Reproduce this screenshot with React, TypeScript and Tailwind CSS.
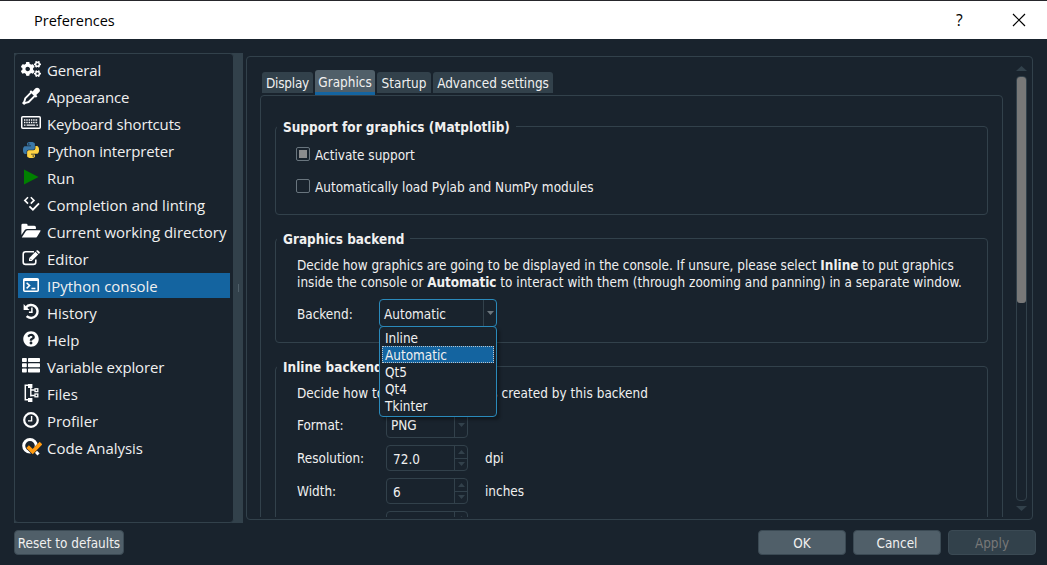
import type { ReactNode } from "react";
import { FaCogs, FaQuestionCircle } from "react-icons/fa";

const PYTHON_HALF =
  "M14.25.18l.9.2.73.26.59.3.45.32.34.34.25.34.16.33.1.3.04.26.02.2-.01.13V8.5l-.05.63-.13.55-.21.46-.26.38-.3.31-.33.25-.35.19-.35.14-.33.1-.3.07-.26.04-.21.02H8.77l-.69.05-.59.14-.5.22-.41.27-.33.32-.27.35-.2.36-.15.37-.1.35-.07.32-.04.27-.02.21v3.06H3.17l-.21-.03-.28-.07-.32-.12-.35-.18-.36-.26-.36-.36-.35-.46-.32-.59-.28-.73-.21-.88-.14-1.05-.05-1.23.06-1.22.16-1.04.24-.87.32-.71.36-.57.4-.44.42-.33.42-.24.4-.16.36-.1.32-.05.24-.01h.16l.06.01h8.16v-.83H6.18l-.01-2.75-.02-.37.05-.34.11-.31.17-.28.25-.26.31-.23.38-.2.44-.18.51-.15.58-.12.64-.1.71-.06.77-.04.84-.02 1.27.05zm-6.3 1.98l-.23.33-.08.41.08.41.23.34.33.22.41.09.41-.09.33-.22.23-.34.08-.41-.08-.41-.23-.33-.33-.22-.41-.09-.41.09z";

const DropperIcon = () => (
  <svg width="19" height="18" viewBox="0 0 19 18" fill="none">
    <path
      d="M9.4 5.2L3.2 11.4L2.4 14.6L1.2 16L2.2 16.8L3.6 15.8L6.6 15L12.8 8.8"
      stroke="currentColor"
      strokeWidth="1.9"
      strokeLinejoin="round"
    />
    <path
      d="M7.6 4.6L9 3.2L10.6 4.4L13.2 1.4C15.6-.9 19.6 2.600 17.300 5L14.200 7.900L15.400 9.300L13.900 10.800z"
      fill="currentColor"
    />
  </svg>
);

const KeyboardIcon = () => (
  <svg width="20" height="13" viewBox="0 0 20 13" fill="none" stroke="currentColor">
    <rect x="0.75" y="0.75" width="18.5" height="11.5" rx="1" strokeWidth="1.5" />
    <path d="M3 4h14M3 6.5h14" strokeWidth="1.3" strokeDasharray="1.4 0.9" />
    <path d="M3 9.2h1.5M5.6 9.2h8.600M15.400 9.200h1.600" strokeWidth="1.3" />
  </svg>
);

const PythonIcon = () => (
  <svg width="16" height="16" viewBox="0 0 24 24">
    <path d={PYTHON_HALF} fill="#3b78a8" />
    <path d={PYTHON_HALF} fill="#ffd343" transform="rotate(180 12 12)" />
  </svg>
);

const RunIcon = () => (
  <svg width="16" height="16" viewBox="0 0 16 16">
    <path d="M1 0.5L15.5 8L1 15.5z" fill="#008000" />
  </svg>
);

const LintIcon = () => (
  <svg width="17" height="16" viewBox="0 0 17 16" fill="none" stroke="currentColor" strokeWidth="1.6">
    <path d="M5 1.2L1.8 4.4L5 7.6M7.8 1.2L11 4.4L7.8 7.6" />
    <path d="M6.4 10.4L9.9 13.7L16 7.4" strokeWidth="1.8" />
  </svg>
);

const FolderIcon = () => (
  <svg width="20" height="16" viewBox="0 0 20 16" fill="currentColor">
    <path d="M0.400 13.200V2.200Q0.400 0.800 1.800 0.800H5.200Q6.600 0.800 6.600 2.200V2.700H13.400Q14.900 2.700 14.900 4.200V6H6.200Q4.600 6 3.600 7.200L0.400 12z" />
    <path d="M0.900 14.200L4.800 8.200Q5.500 7.200 6.700 7.200H19Q20 7.200 19.400 8.200L16.200 13.400Q15.500 14.600 14.200 14.600H1.200Q0.700 14.600 0.900 14.200z" />
  </svg>
);

const EditIcon = () => (
  <svg width="19" height="16" viewBox="0 0 19 16" fill="none" stroke="currentColor">
    <path d="M12 1.800H3.600Q1.200 1.800 1.200 4.200V12Q1.200 14.400 3.600 14.400H11.400Q13.800 14.400 13.800 12V9.600" strokeWidth="1.6" />
    <path d="M7 8.200L13.400 1.800L16.200 4.600L9.800 11H7z" fill="currentColor" stroke="none" />
    <path d="M14.100 1.100L15 0.300Q15.500 0 16 0.400L17.700 2.100Q18.100 2.600 17.700 3.100L16.900 3.900z" fill="currentColor" stroke="none" />
    <path d="M8.200 8.800L9.200 9.800" stroke="#19232d" strokeWidth="1" />
  </svg>
);

const ConsoleIcon = () => (
  <svg width="16" height="14" viewBox="0 0 16 14" fill="none" stroke="currentColor">
    <rect x="0.8" y="0.8" width="14.4" height="12.4" rx="1" strokeWidth="1.6" />
    <path d="M0.8 2h14.4" strokeWidth="2" />
    <path d="M3.6 4.8L6.6 7.6L3.6 10.4M8.4 10.4h4" strokeWidth="1.5" />
  </svg>
);

const HistoryIcon = () => (
  <svg width="17" height="17" viewBox="0 0 17 17" fill="none" stroke="currentColor">
    <path d="M3 4.400A6.500 6.500 0 1 1 3.600 13.200" strokeWidth="2.400" />
    <path d="M0.600 1V6.900H6.500z" fill="currentColor" stroke="none" />
    <path d="M8.900 4.600V9.300H5.900" strokeWidth="1.500" />
  </svg>
);

const ListIcon = () => (
  <svg width="18" height="15" viewBox="0 0 18 15" fill="currentColor">
    {[0, 5.2, 10.4].map((y) => (
      <g key={y}>
        <rect x="0" y={y} width="4.800" height="4" rx="0.700" />
        <rect x="6" y={y} width="12" height="4" rx="0.700" />
      </g>
    ))}
  </svg>
);

const TreeIcon = () => (
  <svg width="17" height="18" viewBox="0 0 17 18" fill="none" stroke="currentColor">
    <path d="M5 1.2H2.3v14.6H5" strokeWidth="1.5" />
    <path d="M7.8 3v9.5M7.8 6h4M7.8 11.5h4" strokeWidth="1.4" />
    <path d="M5 0h4.4v4H5zM5 14h4.4v4H5z" fill="currentColor" stroke="none" />
    <rect x="12" y="4.8" width="2.8" height="2.8" strokeWidth="1.3" />
    <rect x="12" y="10" width="2.8" height="2.8" strokeWidth="1.3" />
  </svg>
);

const ClockIcon = () => (
  <svg width="16" height="16" viewBox="0 0 16 16" fill="none" stroke="currentColor">
    <circle cx="8" cy="8" r="6.8" strokeWidth="2.2" />
    <path d="M8.6 4v4.9H5" strokeWidth="1.4" />
  </svg>
);

const AnalysisIcon = () => (
  <svg width="20" height="18" viewBox="0 0 20 18" fill="none" className="ml-[2px]">
    <circle cx="8" cy="7.8" r="6.3" stroke="#fff" strokeWidth="3" />
    <path d="M11.5 11l5 5.5" stroke="#fff" strokeWidth="3" />
    <path d="M6 9.300L10.700 14L18.800 5.600" stroke="#19232d" strokeWidth="4.400" />
    <path d="M5.600 8.600L10.700 13.600L19 5" stroke="#ff9a10" strokeWidth="3.700" />
  </svg>
);

const PAGES: { label: string; icon: ReactNode }[] = [
  { label: "General", icon: <FaCogs size={20} /> },
  { label: "Appearance", icon: <DropperIcon /> },
  { label: "Keyboard shortcuts", icon: <KeyboardIcon /> },
  { label: "Python interpreter", icon: <PythonIcon /> },
  { label: "Run", icon: <RunIcon /> },
  { label: "Completion and linting", icon: <LintIcon /> },
  { label: "Current working directory", icon: <FolderIcon /> },
  { label: "Editor", icon: <EditIcon /> },
  { label: "IPython console", icon: <ConsoleIcon /> },
  { label: "History", icon: <HistoryIcon /> },
  { label: "Help", icon: <FaQuestionCircle size={16} /> },
  { label: "Variable explorer", icon: <ListIcon /> },
  { label: "Files", icon: <TreeIcon /> },
  { label: "Profiler", icon: <ClockIcon /> },
  { label: "Code Analysis", icon: <AnalysisIcon /> },
];

const TIGHT = ["Keyboard shortcuts", "Python interpreter", "Appearance", "General", "Variable explorer"];

const Arrow = ({ up = false, className }: { up?: boolean; className: string }) => (
  <svg viewBox="0 0 10 5" preserveAspectRatio="none" className={`shrink-0 ${className}`}>
    <path d={up ? "M0 5L5 0L10 5z" : "M0 0L5 5L10 0z"} fill="currentColor" />
  </svg>
);

const Group = ({ title, className, children }: { title: string; className: string; children: ReactNode }) => (
  <fieldset className={`w-[713px] min-w-0 shrink-0 rounded-[4px] border border-[#32414b] pl-[21px] ${className}`}>
    <legend className="-ml-[20px] h-[17px] px-[6px] font-bold leading-[19px] tracking-[0.02px]">{title}</legend>
    {children}
  </fieldset>
);

const Check = ({ label, partial = false }: { label: string; partial?: boolean }) => (
  <div className="flex h-[14px] items-center">
    <span className="-ml-px mr-[5px] flex size-[14px] items-center justify-center rounded-[2px] border border-[#69757e]">
      {partial && <span className="size-2 bg-[#8b8c8d]" />}
    </span>
    <span className="whitespace-pre pt-[2px]">{label}</span>
  </div>
);

const Spin = ({ value }: { value?: string }) => (
  <div className="flex h-[26px] w-[82px] shrink-0 rounded-[4px] border border-[#32414b]">
    <span className="flex-1 pl-[6px] pt-[1px] leading-[25px]">{value}</span>
    <div className="flex w-[13px] flex-col border-l border-[#32414b] text-[#32414b]">
      <div className="flex flex-1 items-center justify-center border-b border-[#32414b]">
        <Arrow up className="h-[4px] w-[7px]" />
      </div>
      <div className="flex flex-1 items-center justify-center">
        <Arrow className="h-[4px] w-[7px]" />
      </div>
    </div>
  </div>
);

const Field = ({ label, unit, className, children }: { label?: string; unit?: string; className: string; children: ReactNode }) => (
  <div className={`flex h-[26px] items-center ${className}`}>
    <span className="w-[89px] pt-px leading-[17px]">{label}</span>
    {children}
    {unit && <span className="pl-[17px] pt-px">{unit}</span>}
  </div>
);

const Button = ({ label, className }: { label: string; className: string }) => (
  <button className={`flex h-[25px] items-center justify-center rounded-[4px] border border-[#3b4a54] pt-px ${className}`}>{label}</button>
);

const BACKENDS = ["Inline", "Automatic", "Qt5", "Qt4", "Tkinter"];

const BackendSelect = () => (
  <div className="relative -ml-[7px] h-[28px] w-[118px] shrink-0">
    <div className="flex h-full rounded-[4px] border border-[#2a8abb]">
      <span className="flex-1 pl-[4px] pt-[2px] leading-[26px]">Automatic</span>
      <div className="flex w-[13px] items-center justify-center border-l border-[#32414b] text-[#6b757c]">
        <Arrow className="h-[4px] w-[7px]" />
      </div>
    </div>
    <ul className="absolute left-0 top-[27px] z-10 h-[91px] w-[118px] rounded-[4px] border border-[#2a8abb] bg-[#19232d] px-[2px] py-[2px] leading-[17px] shadow-[3px_3px_3px_rgba(0,0,0,0.3)]">
      {BACKENDS.map((name) => (
        <li
          key={name}
          className={
            name === "Automatic"
              ? "h-[17px] border border-dotted border-[#b9c4cb] bg-[#1464a0] pl-[2px] leading-[17px]"
              : "h-[17px] pl-[3px] pt-px"
          }
        >
          {name}
        </li>
      ))}
    </ul>
  </div>
);

export default function App() {
  return (
    <div className="flex h-[565px] w-[1047px] flex-col overflow-hidden bg-[#19232d] font-['DejaVu_Sans_Condensed','DejaVu_Sans',sans-serif] text-[13.45px] leading-[17px] text-[#f0f0f0]">
      <header className="flex h-[39px] shrink-0 items-center border-t border-[#26262b] bg-white pl-[34px] font-['Open_Sans',sans-serif] text-black">
        <h1 className="pt-px text-[14.5px]">Preferences</h1>
        <span className="ml-auto w-[56px] text-[15.5px]">?</span>
        <svg width="14" height="14" viewBox="0 0 14 14" fill="none" stroke="#000" strokeWidth="1.2" className="mr-[21px]">
          <path d="M1 1l12 12M13 1L1 13" />
        </svg>
      </header>

      <div className="flex h-[484px] shrink-0 pl-[14px] pt-[14px]">
        <nav className="flex h-[470px] w-[229px] shrink-0 bg-[#32414b]">
          <ul className="flex w-[220px] flex-col gap-[2px] rounded-[4px] border border-[#32414b] bg-[#19232d] pb-1 pl-[3px] pr-[3px] pt-[3px] font-['Open_Sans',sans-serif] text-[14.95px] leading-[25px]">
            {PAGES.map(({ label, icon }) => (
              <li
                key={label}
                className={`flex h-[25px] shrink-0 items-center whitespace-nowrap ${label === "IPython console" ? "bg-[#1464a0]" : ""} ${TIGHT.includes(label) ? "tracking-[-0.12px]" : ""}`}
              >
                <span className="flex w-[26px] shrink-0 justify-center pb-[2px] text-white">{icon}</span>
                <span className="pl-[3px] pt-px">{label}</span>
              </li>
            ))}
          </ul>
          <div className="flex flex-1 items-center justify-center">
            <span className="h-[8px] w-px bg-[#50606a]" />
          </div>
        </nav>

        <main className="ml-[3px] mt-[3px] flex h-[464px] w-[787px] shrink-0 rounded-[4px] border border-[#32414b] pl-[13px]">
          <section className="flex h-[460px] w-[743px] shrink-0 flex-col overflow-hidden">
            <div className="ml-[2px] flex h-[38px] shrink-0 items-start gap-[2px] pt-[15px] [&>span]:rounded-t-[3px] [&>span]:text-center [&>span]:whitespace-nowrap">
              <span className="h-[21px] w-[51px] bg-[#32414b] leading-[24px] tracking-[-0.2px]">Display</span>
              <span className="-mt-[2px] h-[25px] w-[60px] border-b-[3px] border-[#1464a0] bg-[#505f69] leading-[26px]">Graphics</span>
              <span className="h-[21px] w-[54px] bg-[#32414b] leading-[24px]">Startup</span>
              <span className="h-[21px] w-[120px] bg-[#32414b] leading-[24px]">Advanced settings</span>
            </div>

            <div className="flex h-[460px] shrink-0 flex-col rounded-[4px] border border-[#32414b] pl-[14px] pt-[22px]">
              <Group title="Support for graphics (Matplotlib)" className="h-[97px] pt-[12px]">
                <Check label="Activate support" partial />
                <div className="h-[18px]" />
                <Check label="Automatically load Pylab and NumPy modules" />
              </Group>

              <Group title="Graphics backend" className="mt-[15px] h-[113px] pt-[10px]">
                <p className="whitespace-nowrap">
                  <span className="tracking-[-0.01px]">
                    Decide how graphics are going to be displayed in the console. If unsure, please select <b>Inline</b> to put graphics
                  </span>
                  <br />
                  <span className="tracking-[0.035px]">
                    inside the console or <b className="tracking-[-0.1px]">Automatic</b> to interact with them (through zooming and panning) in a separate window.
                  </span>
                </p>
                <div className="mt-[8px] flex items-center">
                  <span className="w-[89px] pt-[2px]">Backend:</span>
                  <BackendSelect />
                </div>
              </Group>

              <Group title="Inline backend" className="mt-[15px] h-[220px] pt-[10px]">
                <p className="whitespace-nowrap tracking-[0.045px]">Decide how to render the figures created by this backend</p>
                <Field label="Format:" className="mt-[10px]">
                  <div className="flex h-[26px] w-[82px] rounded-[4px] border border-[#32414b]">
                    <span className="flex-1 pl-[4px] pt-[1px] leading-6">PNG</span>
                    <div className="flex w-[13px] items-center justify-center border-l border-[#32414b] text-[#32414b]">
                      <Arrow className="h-[4px] w-[7px]" />
                    </div>
                  </div>
                </Field>
                <Field label="Resolution:" unit="dpi" className="mt-[7px]">
                  <Spin value="72.0" />
                </Field>
                <Field label="Width:" unit="inches" className="mt-[7px]">
                  <Spin value="6" />
                </Field>
                <Field className="mt-[7px]">
                  <Spin />
                </Field>
              </Group>
            </div>
          </section>

          <div className="ml-[13px] flex w-[11px] flex-col items-center pb-[8px] pt-[9px] text-[#32414b]">
            <Arrow up className="h-[5px] w-[11px]" />
            <div className="mb-[5px] mt-[5px] w-[11px] flex-1 rounded-[4px] border border-[#32414b]">
              <div className="h-[226px] rounded-[3px] bg-[#787878]" />
            </div>
            <Arrow className="h-[5px] w-[11px]" />
          </div>
        </main>
      </div>

      <footer className="flex pl-[14px] pt-[7px]">
        <Button label="Reset to defaults" className="w-[110px] bg-[#505f69]" />
        <Button label="OK" className="ml-auto w-[88px] bg-[#505f69]" />
        <Button label="Cancel" className="ml-[7px] w-[88px] bg-[#505f69]" />
        <Button label="Apply" className="ml-[7px] mr-[11px] w-[88px] bg-[#32414b] text-[#787878]" />
      </footer>
    </div>
  );
}
